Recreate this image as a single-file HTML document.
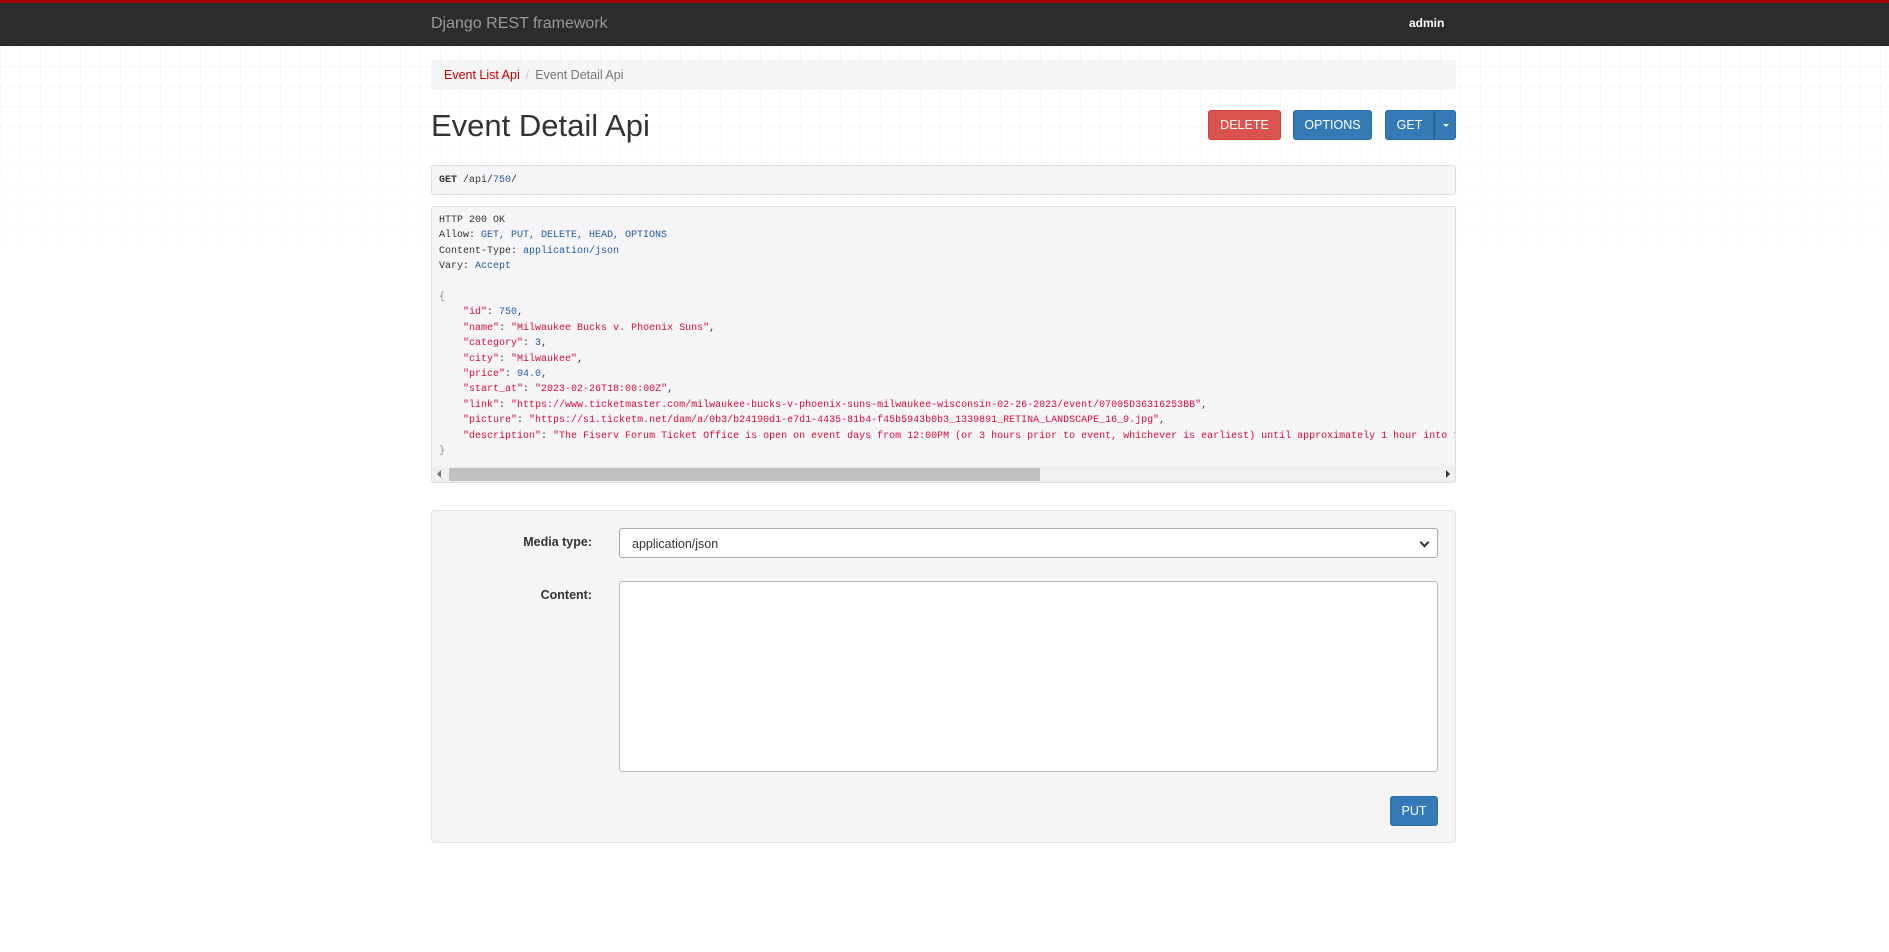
<!DOCTYPE html>
<html><head><meta charset="utf-8"><style>
*{box-sizing:border-box}
body{margin:0;width:1889px;height:952px;background:#fff;font-family:"Liberation Sans",sans-serif;color:#333;position:relative;overflow:hidden}
.grid{position:absolute;left:0;top:46px;width:1889px;height:220px;background-image:linear-gradient(#eee 1px,transparent 1px),linear-gradient(90deg,#eee 1px,transparent 1px);background-size:20px 20px;-webkit-mask-image:linear-gradient(#000,rgba(0,0,0,0));mask-image:linear-gradient(#000,rgba(0,0,0,0));opacity:.6}
.nav{position:absolute;left:0;top:0;width:100%;height:46px;background:#2c2c2c;border-top:3px solid #a30000}
.brand{position:absolute;left:431px;top:12px;font-size:16px;color:#999}
.admin{position:absolute;left:1409px;top:13px;font-size:12px;color:#fff;font-weight:bold}
.abs{position:absolute}
.bc{left:431px;top:60px;width:1025px;height:30px;background:#f5f5f5;border-radius:4px;font-size:12.5px;padding:8px 13px;color:#777}
.bc a{color:#c20000;text-decoration:none}
.bc .sep{color:#ccc;padding:0 6px}
h1{position:absolute;left:431px;top:108px;margin:0;font-size:31px;font-weight:normal;color:#333}
.btn{position:absolute;top:110px;height:30px;border-radius:3px;color:#fff;font-size:12.5px;text-align:center;line-height:28px}
.del{left:1208px;width:73px;background:#d9534f;border:1px solid #d43f3a}
.opt{left:1293px;width:79px;background:#337ab7;border:1px solid #2e6da4}
.get{left:1385px;width:49px;background:#337ab7;border:1px solid #2e6da4;border-radius:3px 0 0 3px}
.car{left:1434px;width:22px;background:#337ab7;border:1px solid #2e6da4;border-radius:0 3px 3px 0;border-left-color:#285e8e}
.car:after{content:"";position:absolute;left:8px;top:13px;border:3px solid transparent;border-top:3px solid #fff}
pre{margin:0;font-family:"Liberation Mono",monospace;font-size:10px;line-height:15.4px;color:#333}
.req{left:431px;top:165px;width:1025px;height:30px;background:#f5f5f7;border:1px solid #ddd;border-radius:3px;padding:7px 7px}
.res{left:431px;top:206px;width:1025px;height:277px;background:#f5f5f7;border:1px solid #ddd;border-radius:3px;overflow:hidden}
.res pre{padding:6px 7px;white-space:pre}
.b{color:#1f5b9a}.s{color:#d0103a}
.sb{position:absolute;left:0;bottom:0;width:100%;height:16px;background:#f0f0f0}
.thumb{position:absolute;left:17px;top:2px;width:591px;height:13px;background:#c1c1c1}
.al{position:absolute;left:5px;top:4px;border:4px solid transparent;border-right:4px solid #777;border-left:0}
.ar{position:absolute;right:5px;top:4px;border:4px solid transparent;border-left:4px solid #333;border-right:0}
.form{left:431px;top:510px;width:1025px;height:333px;background:#f5f5f5;border:1px solid #e3e3e3;border-radius:4px}
.lbl{position:absolute;font-size:12.5px;font-weight:bold;color:#333;text-align:right;width:200px}
.sel{left:619px;top:528px;width:819px;height:30px;border:1px solid #aaa;border-radius:3px;background:#fff;font-size:12.5px;padding:8px 12px;color:#333}
.sel:after{content:"";position:absolute;right:9px;top:10px;width:5px;height:5px;border-right:2px solid #333;border-bottom:2px solid #333;transform:rotate(45deg)}
.ta{left:619px;top:581px;width:819px;height:191px;border:1px solid #bbb;border-radius:3px;background:#fff}
.put{left:1390px;top:796px;width:48px}
</style></head><body>
<div class="grid"></div>
<div class="nav"><div class="brand">Django REST framework</div><div class="admin">admin</div></div>
<div class="abs bc"><a>Event List Api</a><span class="sep">/</span>Event Detail Api</div>
<h1>Event Detail Api</h1>
<div class="btn del">DELETE</div><div class="btn opt">OPTIONS</div><div class="btn get">GET</div><div class="btn car"></div>
<div class="abs req"><pre><b>GET</b> /api/<span class="b">750</span>/</pre></div>
<div class="abs res"><pre>HTTP 200 OK
Allow: <span class="b">GET, PUT, DELETE, HEAD, OPTIONS</span>
Content-Type: <span class="b">application/json</span>
Vary: <span class="b">Accept</span>

<span style="color:#888">{</span>
    <span class="s">"id"</span>: <span class="b">750</span>,
    <span class="s">"name"</span>: <span class="s">"Milwaukee Bucks v. Phoenix Suns"</span>,
    <span class="s">"category"</span>: <span class="b">3</span>,
    <span class="s">"city"</span>: <span class="s">"Milwaukee"</span>,
    <span class="s">"price"</span>: <span class="b">94.0</span>,
    <span class="s">"start_at"</span>: <span class="s">"2023-02-26T18:00:00Z"</span>,
    <span class="s">"link"</span>: <span class="s">"https://www.ticketmaster.com/milwaukee-bucks-v-phoenix-suns-milwaukee-wisconsin-02-26-2023/event/07005D36316253BB"</span>,
    <span class="s">"picture"</span>: <span class="s">"https://s1.ticketm.net/dam/a/0b3/b24190d1-e7d1-4435-81b4-f45b5943b0b3_1339891_RETINA_LANDSCAPE_16_9.jpg"</span>,
    <span class="s">"description"</span>: <span class="s">"The Fiserv Forum Ticket Office is open on event days from 12:00PM (or 3 hours prior to event, whichever is earliest) until approximately 1 hour into the event."</span>
<span style="color:#888">}</span></pre>
<div class="sb"><div class="al"></div><div class="thumb"></div><div class="ar"></div></div></div>
<div class="abs form"></div>
<div class="lbl" style="left:392px;top:535px">Media type:</div>
<div class="abs sel">application/json</div>
<div class="lbl" style="left:392px;top:588px">Content:</div>
<div class="abs ta"></div>
<div class="btn opt put">PUT</div>
</body></html>
